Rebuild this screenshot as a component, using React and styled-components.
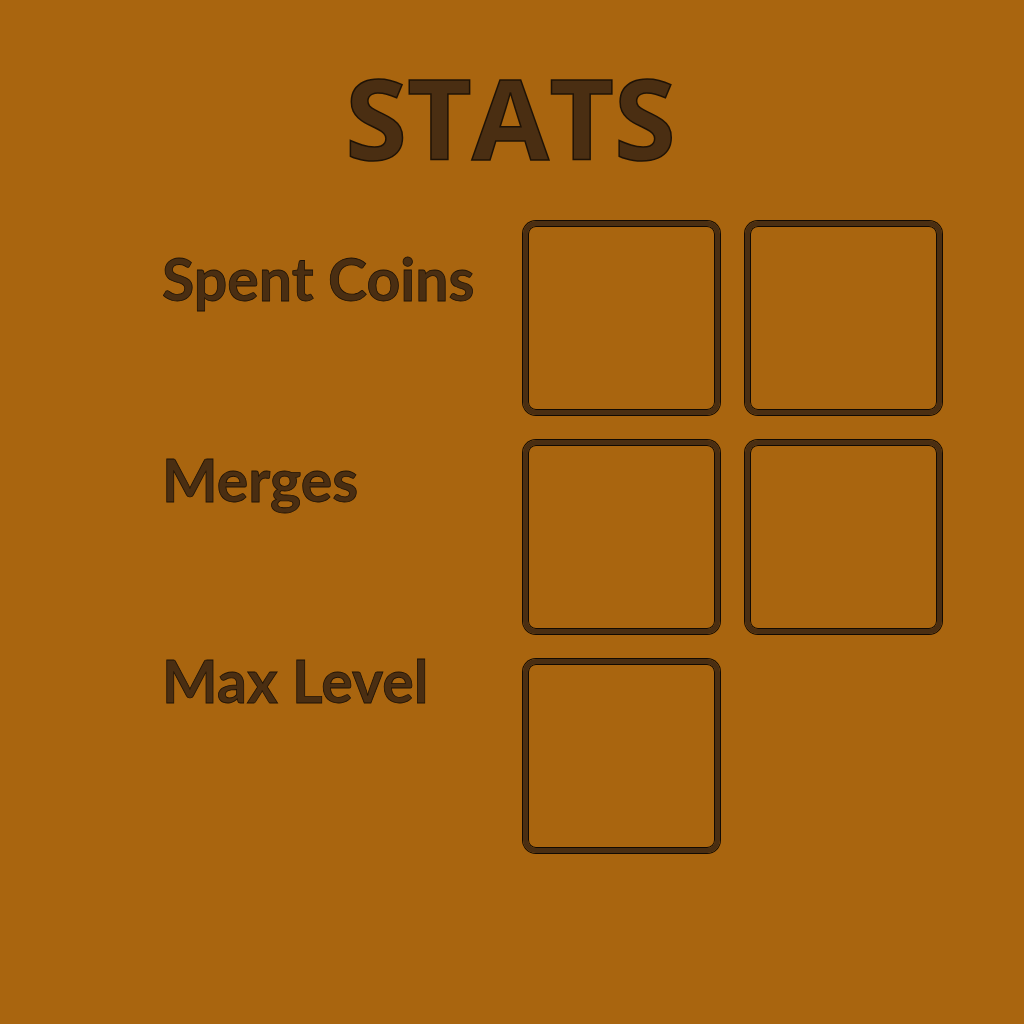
import React from "react";
import styled, { createGlobalStyle } from "styled-components";

const Global = createGlobalStyle`
  html, body { margin: 0; padding: 0; background: #a9650f; }
  #root { width: 1024px; height: 1024px; }
`;

const Page = styled.div`
  width: 1024px;
  height: 1024px;
  box-sizing: border-box;
  padding-top: 49px;
  display: flex;
  flex-direction: column;
  align-items: center;
  font-family: "Open Sans", "Noto Sans", sans-serif;
`;

const Title = styled.h1`
  margin: 0 0 0 -3px;
  font-family: "Open Sans", sans-serif;
  font-weight: 700;
  font-size: 112px;
  line-height: 136px;
  color: #4a2e12;
  -webkit-text-stroke: 1.5px #1e1206;
`;

const Body = styled.div`
  align-self: stretch;
  display: flex;
  padding-left: 162px;
  margin-top: 35px;
`;

const Labels = styled.div`
  width: 360px;
  display: flex;
  flex-direction: column;
  gap: 121px;
  padding-top: 19px;
`;

const Label = styled.div`
  font-family: "Lato", sans-serif;
  font-weight: 700;
  font-size: 59px;
  line-height: 80px;
  color: #4a2e12;
  -webkit-text-stroke: 0.8px #1e1206;
`;

const Grid = styled.div`
  display: grid;
  grid-template-columns: repeat(2, 199px);
  grid-auto-rows: 196px;
  column-gap: 23px;
  row-gap: 23px;
`;

const Slot = styled.div`
  box-sizing: border-box;
  border: 5px solid #4a2e12;
  border-radius: 13px;
  box-shadow: 0 0 0 1px #120a02, inset 0 0 0 1px #120a02;
  margin: 1px;
`;

export default function App() {
  return (
    <>
      <Global />
      <Page>
        <Title>STATS</Title>
        <Body>
          <Labels>
            <Label>Spent Coins</Label>
            <Label>Merges</Label>
            <Label>Max Level</Label>
          </Labels>
          <Grid>
            <Slot />
            <Slot />
            <Slot />
            <Slot />
            <Slot />
          </Grid>
        </Body>
      </Page>
    </>
  );
}
